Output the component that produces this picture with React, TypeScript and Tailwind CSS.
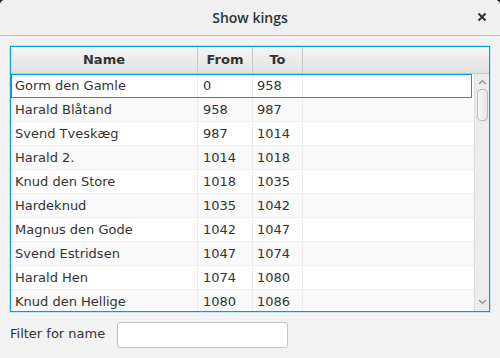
import React from "react"

const kings = [
  { name: "Gorm den Gamle", from: "0", to: "958" },
  { name: "Harald Blåtand", from: "958", to: "987" },
  { name: "Svend Tveskæg", from: "987", to: "1014" },
  { name: "Harald 2.", from: "1014", to: "1018" },
  { name: "Knud den Store", from: "1018", to: "1035" },
  { name: "Hardeknud", from: "1035", to: "1042" },
  { name: "Magnus den Gode", from: "1042", to: "1047" },
  { name: "Svend Estridsen", from: "1047", to: "1074" },
  { name: "Harald Hen", from: "1074", to: "1080" },
  { name: "Knud den Hellige", from: "1080", to: "1086" },
]

const font = { fontFamily: '"DejaVu Sans", "Liberation Sans", sans-serif' }

function Chevron({ down }: { down?: boolean }) {
  return (
    <svg width="9" height="6" viewBox="0 0 9 6" className="block">
      <path
        d={down ? "M1 1 L4.5 4.5 L8 1" : "M1 5 L4.5 1.5 L8 5"}
        fill="none"
        stroke="#8a8a8a"
        strokeWidth="1.2"
      />
    </svg>
  )
}

export default function App() {
  return (
    <div className="w-[500px] h-[358px] bg-[#1e1e1e] overflow-hidden" style={font}>
      <div className="w-full h-full bg-[#f2f2f2] rounded-t-[5px] flex flex-col">
        {/* title bar */}
        <div className="h-[36px] shrink-0 relative flex items-center justify-center border-b border-[#b9b9b9] bg-[#f0f0f0] rounded-t-[5px]">
          <span
            className="text-[14px] font-semibold text-[#2e3436]"
            style={{ fontFamily: '"Open Sans", "DejaVu Sans", sans-serif' }}
          >
            Show kings
          </span>
          <span className="absolute right-[13px] top-[12px]">
            <svg width="10" height="10" viewBox="0 0 10 10">
              <path d="M1.5 1.5 L8.5 8.5 M8.5 1.5 L1.5 8.5" stroke="#2e3436" strokeWidth="2" />
            </svg>
          </span>
        </div>

        {/* table */}
        <div className="mt-[10px] ml-[10px] w-[480px] h-[266px] shrink-0 border border-[#039ed3] shadow-[0_0_0_1px_#bfe4f3] bg-white flex flex-col overflow-hidden">
          <div className="h-[27px] shrink-0 flex border-b border-[#c4c4c4] bg-gradient-to-b from-[#f5f5f5] to-[#e2e2e2] text-[13px] font-bold text-[#333]">
            <div className="w-[187px] flex items-center justify-center border-r border-[#c8c8c8]">Name</div>
            <div className="w-[55px] flex items-center justify-center border-r border-[#c8c8c8]">From</div>
            <div className="w-[50px] flex items-center justify-center border-r border-[#c8c8c8]">To</div>
            <div className="flex-1" />
          </div>
          <div className="flex flex-1 min-h-0">
            <div className="flex-1 flex flex-col overflow-hidden bg-white">
              {kings.map((k, i) => (
                <div
                  key={k.name}
                  className={`h-[24px] shrink-0 flex text-[13px] text-[#333] ${
                    i % 2 === 0 ? "bg-white" : "bg-[#f9f9f9]"
                  } ${i === 0 ? "mr-[2px] outline outline-1 -outline-offset-1 outline-[#039ed3]" : "border-b border-[#f0f0f0]"}`}
                >
                  <div className="w-[187px] pl-[4px] flex items-center border-r border-[#ececec]">{k.name}</div>
                  <div className="w-[55px] pl-[5px] flex items-center border-r border-[#ececec]">{k.from}</div>
                  <div className="w-[50px] pl-[4px] flex items-center border-r border-[#ececec]">{k.to}</div>
                  <div className="flex-1" />
                </div>
              ))}
            </div>
            {/* scrollbar */}
            <div className="w-[15px] shrink-0 bg-[#ececec] border-l border-[#dcdcdc] flex flex-col items-center">
              <div className="h-[14px] flex items-center justify-center mt-[1px]">
                <Chevron />
              </div>
              <div className="w-[11px] h-[32px] rounded-[4px] border border-[#b8b8b8] bg-gradient-to-r from-[#f8f8f8] to-[#e4e4e4]" />
              <div className="flex-1" />
              <div className="h-[14px] flex items-center justify-center mb-[2px]">
                <Chevron down />
              </div>
            </div>
          </div>
        </div>

        {/* filter */}
        <div className="mt-[10px] ml-[10px] flex items-center gap-[12px]">
          <span className="text-[13px] text-[#333] mb-[3px]">Filter for name</span>
          <input
            className="w-[171px] h-[26px] bg-white border border-[#c3c3c3] rounded-[3px] outline-none"
            style={font}
          />
        </div>
      </div>
    </div>
  )
}
